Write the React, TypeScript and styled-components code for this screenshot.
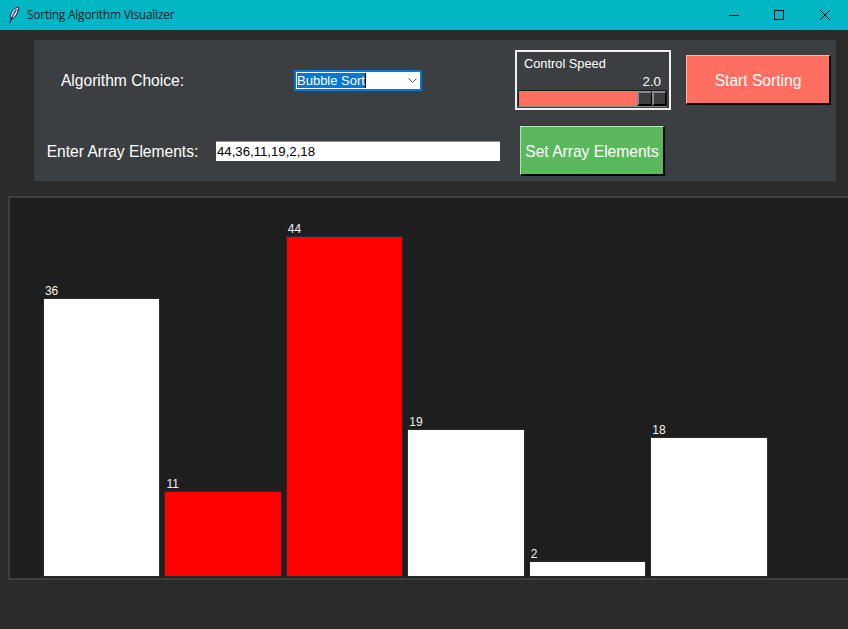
import React from "react";
import styled, { createGlobalStyle } from "styled-components";

const Global = createGlobalStyle`
  html, body { margin: 0; padding: 0; height: 100%; overflow: hidden; background: #2b2b2b; }
  #root { width: 100%; height: 100%; }
  * { box-sizing: border-box; }
`;

const Page = styled.div`
  display: flex;
  flex-direction: column;
  width: 848px;
  height: 629px;
  overflow: hidden;
  background: #2b2b2b;
  font-family: "Liberation Sans", Arial, sans-serif;
  color: #fff;
`;

const TitleBar = styled.header`
  display: flex;
  align-items: center;
  flex: 0 0 30px;
  height: 30px;
  padding-left: 8px;
  background: #00b7c3;
  color: #06222a;
`;

const TitleText = styled.span`
  margin-left: 7px;
  font-family: "Open Sans", "Noto Sans", sans-serif;
  font-size: 12px;
  letter-spacing: -0.25px;
  line-height: 30px;
`;

const WindowControls = styled.div`
  display: flex;
  margin-left: auto;
`;

const WindowButton = styled.div`
  display: flex;
  align-items: center;
  justify-content: center;
  width: 46px;
  height: 30px;
`;

const Panel = styled.section`
  display: grid;
  grid-template-columns: 157px 284px 156px 145px;
  grid-template-rows: 60px 50px;
  column-gap: 15px;
  row-gap: 16px;
  align-items: center;
  justify-items: center;
  width: 802px;
  height: 141px;
  margin: 10px 0 0 34px;
  padding: 10px 5px 5px 10px;
  background: #3c3f41;
`;

const FieldLabel = styled.label`
  padding-top: 2px;
  font-size: 15.6px;
  line-height: 20px;
  white-space: nowrap;
`;

const Select = styled.div`
  display: flex;
  align-items: center;
  justify-content: space-between;
  align-self: start;
  width: 128px;
  height: 21px;
  margin-top: 20px;
  padding: 0 3px 0 1px;
  border: 2px solid #0078d7;
  background: #fff;
`;

const SelectedText = styled.span`
  display: block;
  height: 15px;
  background: #0078d7;
  border-right: 1px solid #000;
  color: #fff;
  font-size: 13px;
  line-height: 15px;
  white-space: nowrap;
`;

const ArrayInput = styled.input`
  justify-self: stretch;
  width: 284px;
  height: 20px;
  padding: 0 0 0 1px;
  border: 0;
  border-top: 1px solid #8c8c8c;
  outline: 0;
  background: #fff;
  color: #000;
  font-family: "Liberation Sans", Arial, sans-serif;
  font-size: 13.2px;
`;

const SpeedFrame = styled.div`
  display: flex;
  flex-direction: column;
  width: 156px;
  height: 60px;
  padding: 1px;
  border: 2px solid #f0f0f0;
  background: #3c3f41;
`;

const SpeedTitle = styled.div`
  height: 18px;
  padding: 3px 0 0 6px;
  font-size: 12.8px;
  line-height: 15px;
`;

const SpeedValue = styled.div`
  height: 20px;
  padding: 3px 7px 0 0;
  text-align: right;
  font-size: 13.33px;
  line-height: 15px;
`;

const Trough = styled.div`
  display: flex;
  width: 149px;
  height: 17px;
  border-top: 1px solid #1a1a1a;
  border-left: 1px solid #1a1a1a;
  border-right: 1px solid #1a1a1a;
  border-bottom: 1px solid #8a8a8a;
  background: #ff6f61;
`;

const SliderHandle = styled.div`
  display: flex;
  flex: 0 0 29px;
  margin-left: auto;
`;

const SliderPart = styled.div`
  flex: 1;
  border-top: 2px solid #8a8a8a;
  border-left: 2px solid #8a8a8a;
  border-right: 1px solid #000;
  border-bottom: 2px solid #000;
  background: #3c3f41;
`;

const ActionButton = styled.button<{ $tone: string; $edge: string }>`
  width: 145px;
  height: 50px;
  padding: 2px 0 0;
  border-style: solid;
  border-width: 1px 2px 2px 1px;
  border-color: ${(p) => p.$edge} #000 #000 ${(p) => p.$edge};
  background: ${(p) => p.$tone};
  color: #fff;
  font-family: "Liberation Sans", Arial, sans-serif;
  font-size: 15.6px;
  white-space: nowrap;
`;

const SetButton = styled(ActionButton)`
  margin-right: 1px;
`;

const Chart = styled.section`
  display: flex;
  align-items: flex-end;
  gap: 4.1px;
  flex: 0 0 384px;
  width: 860px;
  height: 384px;
  margin: 15px 0 0 8px;
  padding: 0 0 1px 32.9px;
  border: 2px solid #3c3f41;
  border-right: 0;
  background: #1e1e1e;
`;

const BarColumn = styled.div`
  display: flex;
  flex-direction: column;
  flex: 0 0 117.4px;
`;

const BarValue = styled.span`
  height: 15px;
  padding-left: 2px;
  font-size: 12px;
  line-height: 16px;
  color: #f2f2f2;
`;

const Bar = styled.div<{ $active: boolean }>`
  border: 1px solid #2b2b2b;
  background: ${(p) => (p.$active ? "#ff0000" : "#ffffff")};
`;

const bars = [
  { value: 36, height: 279, active: false },
  { value: 11, height: 86, active: true },
  { value: 44, height: 341, active: true },
  { value: 19, height: 148, active: false },
  { value: 2, height: 16, active: false },
  { value: 18, height: 140, active: false },
];

const Feather = () => (
  <svg width="12" height="18" viewBox="0 0 12 18" aria-hidden="true">
    <path d="M10.5 1 C7 1.5 3.5 5 2.5 9 C2 11 2.2 12.5 3 13.2 C6 12.5 9 9 10 5 C10.5 3.5 10.8 2 10.5 1 Z" fill="#cfe0f5" stroke="#0b1a2a" strokeWidth="1" />
    <path d="M8.5 3.5 C6.5 6 5 9 3.2 13 L1.8 17" fill="none" stroke="#0b1a2a" strokeWidth="1.1" />
    <path d="M5 6.5 L4 10.5 L6.5 8.5 Z" fill="#3f78c8" />
  </svg>
);

export default function App() {
  return (
    <Page>
      <Global />
      <TitleBar>
        <Feather />
        <TitleText>Sorting Algorithm Visualizer</TitleText>
        <WindowControls>
          <WindowButton>
            <svg width="12" height="10" viewBox="0 0 12 10" aria-hidden="true">
              <path d="M2 5.5H12" stroke="#000" strokeWidth="1" />
            </svg>
          </WindowButton>
          <WindowButton>
            <svg width="10" height="10" viewBox="0 0 10 10" aria-hidden="true">
              <rect x="0.5" y="0.5" width="9" height="9" fill="none" stroke="#000" strokeWidth="1" />
            </svg>
          </WindowButton>
          <WindowButton>
            <svg width="10" height="10" viewBox="0 0 10 10" aria-hidden="true">
              <path d="M0 0L10 10M10 0L0 10" stroke="#000" strokeWidth="1" />
            </svg>
          </WindowButton>
        </WindowControls>
      </TitleBar>

      <Panel>
        <FieldLabel>Algorithm Choice:</FieldLabel>
        <Select>
          <SelectedText>Bubble Sort</SelectedText>
          <svg width="9" height="5" viewBox="0 0 9 5" aria-hidden="true">
            <path d="M0.5 0.5L4.5 4.5L8.5 0.5" fill="none" stroke="#555" strokeWidth="1" />
          </svg>
        </Select>
        <SpeedFrame>
          <SpeedTitle>Control Speed</SpeedTitle>
          <SpeedValue>2.0</SpeedValue>
          <Trough>
            <SliderHandle>
              <SliderPart />
              <SliderPart />
            </SliderHandle>
          </Trough>
        </SpeedFrame>
        <ActionButton $tone="#ff6f61" $edge="#ffb3ab">Start Sorting</ActionButton>

        <FieldLabel>Enter Array Elements:</FieldLabel>
        <ArrayInput readOnly value="44,36,11,19,2,18" />
        <SetButton $tone="#5cb85c" $edge="#a5f0a5">Set Array Elements</SetButton>
      </Panel>

      <Chart>
        {bars.map((b) => (
          <BarColumn key={b.value}>
            <BarValue>{b.value}</BarValue>
            <Bar $active={b.active} style={{ height: b.height }} />
          </BarColumn>
        ))}
      </Chart>
    </Page>
  );
}
